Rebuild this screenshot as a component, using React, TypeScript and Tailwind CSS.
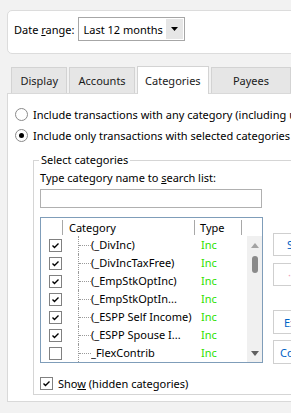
import React from "react";

function Check({ checked }: { checked: boolean }) {
  return (
    <div className="w-[13px] h-[13px] border border-[#808080] bg-white flex items-center justify-center shrink-0">
      {checked && (
        <svg width="11" height="11" viewBox="0 0 11 11">
          <path d="M2.5 5.5 L4.5 7.5 L8.5 3.5" fill="none" stroke="#000" strokeWidth="1.4" />
        </svg>
      )}
    </div>
  );
}

function Radio({ on }: { on: boolean }) {
  return (
    <div className="w-[13px] h-[13px] rounded-full border border-[#8a8a8a] bg-white flex items-center justify-center shrink-0">
      {on && <div className="w-[5px] h-[5px] rounded-full bg-black" />}
    </div>
  );
}

const rows: { name: string; checked: boolean }[] = [
  { name: "(_DivInc)", checked: true },
  { name: "(_DivIncTaxFree)", checked: true },
  { name: "(_EmpStkOptInc)", checked: true },
  { name: "(_EmpStkOptIn...", checked: true },
  { name: "(_ESPP Self Income)", checked: true },
  { name: "(_ESPP Spouse I...", checked: true },
  { name: "_FlexContrib", checked: false },
];

export default function App() {
  return (
    <div className="w-[291px] h-[413px] overflow-hidden bg-[#f2f2f2] font-['Noto_Sans',sans-serif] text-[11px] leading-none text-black">
      {/* Top date range box */}
      <div className="pt-[10px] pl-[7px]">
        <div className="w-[340px] h-[44px] bg-white border border-[#dcdcdc] rounded-[5px] pl-[6px] pt-[6px]">
          <div className="flex items-center gap-[4px]">
            <span className="whitespace-nowrap">
              Date <span className="underline">r</span>ange:
            </span>
            <div className="w-[107px] h-[24px] border border-[#a6a6a6] flex items-stretch p-[1px] bg-white">
              <span className="flex-1 flex items-center pl-[3px] whitespace-nowrap">Last 12 months</span>
              <span className="w-[17px] bg-[#e6e6e6] flex items-center justify-center">
                <svg width="7" height="4" viewBox="0 0 7 4">
                  <path d="M0 0 H7 L3.5 4 Z" fill="#000" />
                </svg>
              </span>
            </div>
          </div>
        </div>
      </div>

      {/* Tabs */}
      <div className="mt-[12px] pl-[11px] flex items-end h-[27px] gap-[2px]">
        <div className="w-[64px] h-[26px] bg-[#e6e6e6] border border-b-0 border-[#d3d3d3] flex items-center justify-center text-[#1a1a1a]">
          Display
        </div>
        <div className="w-[74px] h-[26px] bg-[#e6e6e6] border border-b-0 border-[#d3d3d3] flex items-center justify-center text-[#1a1a1a]">
          Accounts
        </div>
        <div className="relative z-10 w-[82px] h-[28px] -mb-[1px] bg-white border border-b-0 border-[#d3d3d3] flex items-center justify-center text-[#1a1a1a]">
          Categories
        </div>
        <div className="w-[80px] h-[26px] shrink-0 bg-[#e6e6e6] border border-b-0 border-[#d3d3d3] flex items-center justify-center text-[#1a1a1a]">
          Payees
        </div>
      </div>

      {/* Panel */}
      <div className="ml-[7px] w-[400px] h-[309px] bg-white border border-[#d9d9d9] pt-[10px]">
        <div className="flex flex-col gap-[1px] pl-[7px]">
          <div className="h-[20px] flex items-center gap-[5px] whitespace-nowrap">
            <Radio on={false} />
            <span>Include transactions with any category (including uncategorized)</span>
          </div>
          <div className="h-[20px] flex items-center gap-[5px] whitespace-nowrap">
            <Radio on={true} />
            <span>Include only transactions with selected categories</span>
          </div>
        </div>

        {/* Group box */}
        <div className="relative ml-[25px] mt-[15px] w-[360px] h-[235px] border border-[#d5d5d5] pl-[6px] pt-[8px]">
          <span className="absolute -top-[7px] left-[5px] px-[2px] bg-white whitespace-nowrap">Select categories</span>
          <div className="h-[16px] flex items-center whitespace-nowrap">
            <span>
              Type category name to <span className="underline">s</span>earch list:
            </span>
          </div>
          <div className="mt-[4px] w-[222px] h-[19px] border border-[#b0b0b0] bg-white" />
          <div className="mt-[9px] flex items-start">
            {/* List */}
            <div className="w-[223px] h-[146px] border border-[#7f9db9] bg-white overflow-hidden shrink-0">
              <div className="h-[18px] flex items-center">
                <div className="w-[22px] h-[15px] border-r border-[#a8a8a8]" />
                <div className="w-[132px] h-[15px] border-r border-[#a8a8a8] pl-[6px] flex items-center">Category</div>
                <div className="w-[47px] h-[15px] border-r border-[#a8a8a8] pl-[5px] flex items-center">Type</div>
              </div>
              <div className="flex">
                <div className="w-[206px]">
                  {rows.map((r) => (
                    <div key={r.name} className="h-[18px] flex items-center">
                      <div className="w-[37px] pl-[8px] flex items-center">
                        <Check checked={r.checked} />
                      </div>
                      <div className="w-[13px] h-[18px] border-l border-dotted border-[#9a9a9a] flex items-center">
                        <div className="w-[12px] border-t border-dotted border-[#9a9a9a]" />
                      </div>
                      <div className="w-[105px] h-[18px] leading-[18px] whitespace-nowrap overflow-hidden">{r.name}</div>
                      <div className="pl-[5px] leading-[18px] text-[#2ee000]">Inc</div>
                    </div>
                  ))}
                </div>
                <div className="ml-[5px] w-[15px] h-[126px] bg-[#f0f0f0] flex flex-col items-center">
                  <div className="h-[18px] flex items-center">
                    <svg width="8" height="5" viewBox="0 0 8 5">
                      <path d="M0 5 L4 0 L8 5 Z" fill="#a3a3a3" />
                    </svg>
                  </div>
                  <div className="mt-[2px] w-[6px] h-[17px] rounded-full bg-[#8a8a8a]" />
                  <div className="flex-1" />
                  <div className="h-[18px] flex items-center">
                    <svg width="8" height="5" viewBox="0 0 8 5">
                      <path d="M0 0 L8 0 L4 5 Z" fill="#606060" />
                    </svg>
                  </div>
                </div>
              </div>
            </div>
            {/* Buttons */}
            <div className="ml-[10px] mt-[16px] flex flex-col text-[#0063c6]">
              <div className="w-[80px] h-[23px] border border-[#cfcfcf] bg-white flex items-center pl-[13px] whitespace-nowrap">Select all</div>
              <div className="mt-[7px] w-[80px] h-[23px] border border-[#cfcfcf] bg-white flex items-center pl-[14px] whitespace-nowrap text-[#f0a0b8]">·</div>
              <div className="mt-[24px] w-[80px] h-[24px] border border-[#cfcfcf] bg-white flex items-center pl-[10px] whitespace-nowrap">Expand all</div>
              <div className="mt-[6px] w-[80px] h-[24px] border border-[#cfcfcf] bg-white flex items-center pl-[6px] whitespace-nowrap">Collapse all</div>
            </div>
          </div>
          <div className="mt-[11px] h-[16px] flex items-center gap-[5px] whitespace-nowrap">
            <Check checked={true} />
            <span>
              Sho<span className="underline">w</span> (hidden categories)
            </span>
          </div>
        </div>
      </div>
    </div>
  );
}
